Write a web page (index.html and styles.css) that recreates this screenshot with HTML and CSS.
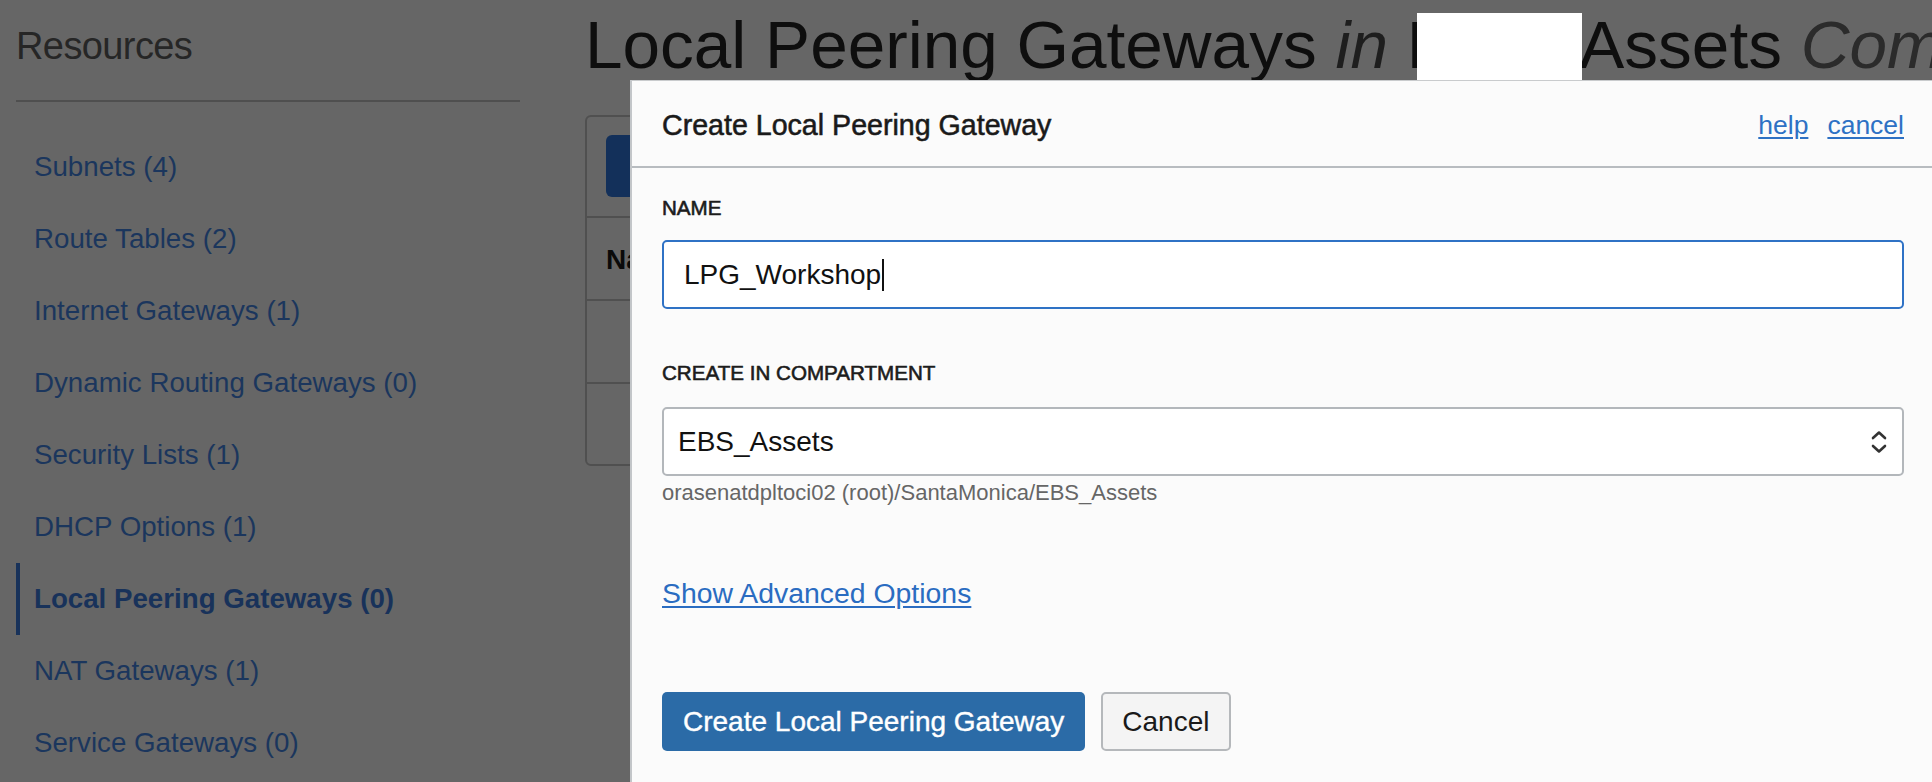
FILE: index.html
```html
<!DOCTYPE html>
<html lang="en">
<head>
<meta charset="utf-8">
<title>Create Local Peering Gateway</title>
<link rel="stylesheet" href="styles.css">
</head>
<body>
<div class="page">
  <aside class="sidebar">
    <h2 class="res-title">Resources</h2>
    <nav class="res-nav">
      <a href="#">Subnets (4)</a>
      <a href="#">Route Tables (2)</a>
      <a href="#">Internet Gateways (1)</a>
      <a href="#">Dynamic Routing Gateways (0)</a>
      <a href="#">Security Lists (1)</a>
      <a href="#">DHCP Options (1)</a>
      <a href="#" class="active">Local Peering Gateways (0)</a>
      <a href="#">NAT Gateways (1)</a>
      <a href="#">Service Gateways (0)</a>
    </nav>
  </aside>
  <main class="main">
    <h1 class="page-title">Local Peering Gateways <em>in</em> <span class="redact">EBS_</span>Assets <em class="muted">Compartment</em></h1>
    <div class="card">
      <div class="toolbar"><button class="btn-dim">Create</button></div>
      <div class="row head">Name</div>
      <div class="row"></div>
      <div class="row last"></div>
    </div>
  </main>
</div>

<section class="modal">
  <header class="modal-head">
    <h3 class="modal-title">Create Local Peering Gateway</h3>
    <div class="head-links">
      <a href="#">help</a>
      <a href="#">cancel</a>
    </div>
  </header>
  <div class="modal-body">
    <label class="field-label">NAME</label>
    <div class="text-input focused">LPG_Workshop<span class="caret"></span></div>

    <label class="field-label second">CREATE IN COMPARTMENT</label>
    <div class="select">
      <span>EBS_Assets</span>
      <svg class="chev" width="18" height="26" viewBox="0 0 18 26" aria-hidden="true">
        <path d="M3 9 L9 3.5 L15 9" fill="none" stroke="#333" stroke-width="2.6" stroke-linecap="round" stroke-linejoin="round"/>
        <path d="M3 17 L9 22.5 L15 17" fill="none" stroke="#333" stroke-width="2.6" stroke-linecap="round" stroke-linejoin="round"/>
      </svg>
    </div>
    <div class="helper">orasenatdpltoci02 (root)/SantaMonica/EBS_Assets</div>

    <a href="#" class="adv-link">Show Advanced Options</a>

    <div class="actions">
      <button class="btn-primary">Create Local Peering Gateway</button>
      <button class="btn-secondary">Cancel</button>
    </div>
  </div>
</section>
</body>
</html>
```

FILE: styles.css
```css
html, body {
  margin: 0;
  padding: 0;
  height: 100%;
  overflow: hidden;
}
body {
  background: #666666;
  font-family: "Liberation Sans", Arial, Helvetica, sans-serif;
  color: #111;
}

.page {
  display: grid;
  grid-template-columns: 585px 1fr;
  white-space: nowrap;
}

/* Sidebar */
.sidebar {
  padding: 24px 65px 0 16px;
}
.res-title {
  margin: 0;
  font-size: 38px;
  line-height: 44px;
  font-weight: 400;
  letter-spacing: -0.6px;
  color: #262626;
  padding-bottom: 32px;
  border-bottom: 2px solid #4f4f4f;
}
.res-nav {
  display: flex;
  flex-direction: column;
  margin-top: 29px;
}
.res-nav a {
  display: block;
  height: 72px;
  line-height: 72px;
  padding-left: 14px;
  border-left: 4px solid transparent;
  font-size: 27.7px;
  color: #1b365d;
  text-decoration: none;
}
.res-nav a.active {
  font-weight: 700;
  color: #18325a;
  border-left-color: #18325a;
}

/* Main */
.main {
  padding-top: 5px;
}
.page-title {
  margin: 0;
  font-size: 67.5px;
  line-height: 80px;
  font-weight: 400;
  color: #0e0e0e;
}
.page-title em {
  color: #1e1e1e;
}
.page-title em.muted {
  color: #2b2b2b;
}
.redact {
  position: relative;
}
.redact::after {
  content: "";
  position: absolute;
  left: 10px;
  right: -3px;
  top: 6px;
  height: 72px;
  background: #ffffff;
}

.card {
  margin-top: 30px;
  width: 1100px;
  border: 2px solid #505050;
  border-radius: 6px;
}
.toolbar {
  padding: 18px 19px 19px 19px;
  border-bottom: 2px solid #505050;
}
.btn-dim {
  height: 62px;
  padding: 0 24px;
  border: none;
  border-radius: 6px;
  background: #13305a;
  color: #555;
  font-family: inherit;
  font-size: 28px;
}
.row {
  height: 81px;
  border-bottom: 2px solid #505050;
  padding-left: 19px;
  font-size: 28px;
  font-weight: 700;
  line-height: 84px;
  color: #0a0a0a;
}
.row.last {
  height: 80px;
  border-bottom: none;
}

/* Modal */
.modal {
  position: absolute;
  left: 630px;
  top: 80px;
  right: 0;
  bottom: -60px;
  background: #fbfbfb;
  border-left: 2px solid #c3c6c9;
  border-top: 1px solid #c9cbcd;
  white-space: nowrap;
}
.modal-head {
  box-sizing: border-box;
  height: 87px;
  display: flex;
  align-items: center;
  justify-content: space-between;
  padding: 4px 28px 0 30px;
  border-bottom: 2px solid #b8bcc0;
}
.modal-title {
  margin: 0;
  font-size: 28.6px;
  font-weight: 400;
  color: #1a1a1a;
  -webkit-text-stroke: 0.55px #1a1a1a;
}
.head-links {
  display: flex;
  gap: 19px;
}
.head-links a {
  font-size: 26.5px;
  color: #2e71c4;
  text-decoration: underline;
  text-underline-offset: 3px;
}

.modal-body {
  padding: 0 28px 0 30px;
  display: flex;
  flex-direction: column;
  align-items: flex-start;
}
.field-label {
  display: block;
  margin-top: 28px;
  font-size: 20.6px;
  line-height: 24px;
  color: #1c1c1c;
  -webkit-text-stroke: 0.6px #1c1c1c;
}
.field-label.second {
  margin-top: 52px;
}
.text-input,
.select {
  align-self: stretch;
  box-sizing: border-box;
  height: 69px;
  margin-top: 20px;
  background: #ffffff;
  border-radius: 5px;
  font-size: 28px;
  color: #111;
  display: flex;
  align-items: center;
}
.text-input {
  border: 2px solid #2f72c5;
  padding-left: 20px;
}
.caret {
  display: inline-block;
  width: 2px;
  height: 32px;
  background: #111;
  margin-left: 1px;
}
.select {
  margin-top: 22px;
  border: 2px solid #b3b7bb;
  padding: 0 14px 0 14px;
  justify-content: space-between;
}
.chev {
  display: block;
}
.helper {
  margin-top: 4px;
  font-size: 22px;
  line-height: 26px;
  color: #666;
}
.adv-link {
  margin-top: 70px;
  font-size: 28.4px;
  line-height: 34px;
  color: #2a6cc1;
  text-decoration: underline;
  text-underline-offset: 3px;
}
.actions {
  margin-top: 82px;
  display: flex;
  gap: 16px;
}
.btn-primary,
.btn-secondary {
  box-sizing: border-box;
  height: 59px;
  border-radius: 5px;
  font-family: inherit;
  font-size: 28px;
  cursor: pointer;
}
.btn-primary {
  padding: 0 21px;
  border: none;
  background: #2b6ba7;
  color: #ffffff;
  -webkit-text-stroke: 0.4px #ffffff;
}
.btn-secondary {
  padding: 0 19px;
  border: 2px solid #b5b8bb;
  background: #f4f4f4;
  color: #1a1a1a;
}
```
